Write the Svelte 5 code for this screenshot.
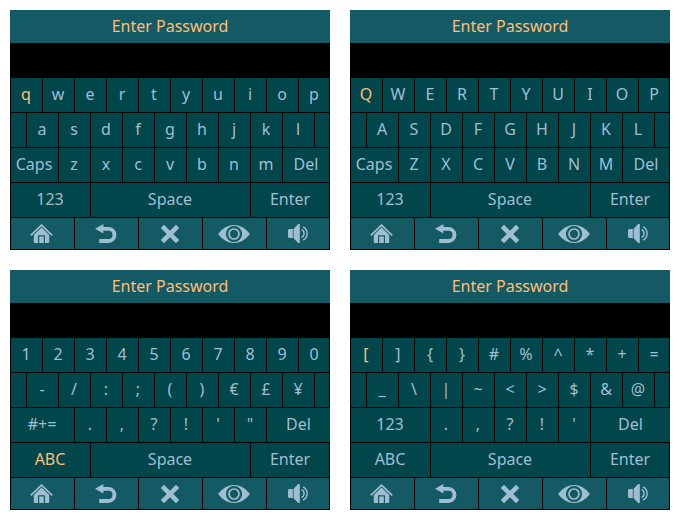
<script>
  const lower = [
    [...'qwertyuiop'],
    ['', ...'asdfghjkl', ''],
    ['Caps', ...'zxcvbnm', 'Del'],
    ['123', 'Space', 'Enter'],
  ];
  const upper = [
    [...'QWERTYUIOP'],
    ['', ...'ASDFGHJKL', ''],
    ['Caps', ...'ZXCVBNM', 'Del'],
    ['123', 'Space', 'Enter'],
  ];
  const numbers = [
    [...'1234567890'],
    ['', ...'-/:;()€£¥', ''],
    ['#+=', ...'.,?!\'"', 'Del'],
    ['ABC', 'Space', 'Enter'],
  ];
  const symbols = [
    [...'[]{}#%^*+='],
    ['', ...'_\\|~<>$&@', ''],
    ['123', ...".,?!'", 'Del'],
    ['ABC', 'Space', 'Enter'],
  ];

  const keyboards = [
    { id: 'lower', rows: lower, active: 'q', edge: 3, open: false },
    { id: 'upper', rows: upper, active: 'Q', edge: 3, open: false },
    { id: 'numbers', rows: numbers, active: 'ABC', edge: 4, open: true },
    { id: 'symbols', rows: symbols, active: '[', edge: 5, open: true },
  ];

  // Key widths are counted in half-key columns, twenty to a row.
  function span(board, row, index, length) {
    const outer = index === 0 || index === length - 1;
    if (row === 2) return outer ? board.edge : 2;
    if (row === 3) return [5, 10, 5][index];
    return 2;
  }
</script>

<main>
  {#each keyboards as board (board.id)}
    <section class="panel">
      <label class="title" for={'password-' + board.id}>Enter Password</label>
      <input id={'password-' + board.id} class="field" type="password" autocomplete="off" />
      {#each board.rows as row, r}
        <div class="row" class:open={board.open && r === 2}>
          {#each row as key, i}
            {#if key === ''}
              <span class="key s1"></span>
            {:else}
              <button type="button" class={'key s' + span(board, r, i, row.length)} class:active={key === board.active}>{key}</button>
            {/if}
          {/each}
        </div>
      {/each}
      <nav class="tools" aria-label="Player">
        <button type="button" aria-label="Home">
          <svg width="23" height="19" viewBox="0 0 23 19">
            <path d="M0.8 11.4 11.5 1.1l10.7 10.3" fill="none" stroke="currentColor" stroke-width="1.7" />
            <path fill-rule="evenodd" d="M11.5 3.6 19.2 11V18Q19.2 19 18.2 19H4.8Q3.8 19 3.8 18V11ZM8 11.2V19H9.2V12.4H13.8V19H15V11.2Z" fill="currentColor" />
          </svg>
        </button>
        <button type="button" aria-label="Back">
          <svg width="22" height="19" viewBox="0 0 22 19">
            <path d="M0 4.8 8.4 0V2.9H13.4A8 8 0 0 1 13.4 18.9H4.2V15H13.4A4.1 4.1 0 0 0 13.4 6.8H8.4V9.6Z" fill="currentColor" />
          </svg>
        </button>
        <button type="button" aria-label="Cancel">
          <svg width="20" height="20" viewBox="0 0 20 20">
            <path d="M2.4 2.4 17.6 17.6M17.6 2.4 2.4 17.6" fill="none" stroke="currentColor" stroke-width="4.6" />
          </svg>
        </button>
        <button type="button" aria-label="Show password">
          <svg width="32" height="18" viewBox="0 0 32 18">
            <path fill-rule="evenodd" d="M0 9Q7 0 16 0T32 9Q25 18 16 18T0 9ZM16 .9a8.1 8.1 0 1 0 0 16.2a8.1 8.1 0 1 0 0-16.2Z" fill="currentColor" />
            <circle cx="16" cy="9" r="5" fill="none" stroke="currentColor" stroke-width="1.7" />
          </svg>
        </button>
        <button type="button" aria-label="Volume">
          <svg width="20" height="19" viewBox="0 0 20 19">
            <path d="M0 6 1 5H4.8V14H1L0 13ZM5.6 4.8 10.2 0H11.8V19H10.2L5.6 14.2Z" fill="currentColor" />
            <path d="M13.6 5.6A4.3 4.3 0 0 1 13.6 13.4M15 2.8A7.5 7.5 0 0 1 15 16.2" fill="none" stroke="currentColor" stroke-width="1.4" />
          </svg>
        </button>
      </nav>
    </section>
  {/each}
</main>

<style>
  :global(body) {
    margin: 0;
    background: #fff;
  }
  main {
    display: grid;
    grid-template-columns: repeat(2, minmax(0, 1fr));
    gap: 20px;
    padding: 10px;
    font: 16px/24px 'Noto Sans', 'Open Sans', sans-serif;
  }
  .panel {
    display: flex;
    flex-direction: column;
    background: #000;
    color: #a0bed2;
  }
  .title {
    padding: 4px 0 5px;
    background: #145a64;
    color: #ffbe78;
    text-align: center;
  }
  .field {
    box-sizing: border-box;
    width: 100%;
    height: 34px;
    margin: 0;
    padding: 0 8px;
    border: 0;
    background: #000;
    color: #a0bed2;
    font: inherit;
    outline: 0;
  }
  .row {
    display: grid;
    grid-template-columns: repeat(20, minmax(0, 1fr));
  }
  button,
  .key {
    box-sizing: border-box;
    min-width: 0;
    margin: 0;
    padding: 0 1px 0 0;
    border: 0 solid #000;
    border-width: 1px 0 0 1px;
    border-radius: 0;
    color: inherit;
    font: inherit;
    text-align: center;
    white-space: nowrap;
    cursor: pointer;
  }
  .key {
    height: 35px;
    padding-bottom: 2px;
    background: #00464b;
  }
  .key:last-child,
  .tools button:last-child {
    padding-right: 0;
    border-right-width: 1px;
  }
  .open .key:last-child {
    border-right-width: 0;
  }
  .key.active {
    color: #ffbe78;
  }
  .s1 { grid-column: span 1; }
  .s2 { grid-column: span 2; }
  .s3 { grid-column: span 3; }
  .s4 { grid-column: span 4; }
  .s5 { grid-column: span 5; }
  .s10 { grid-column: span 10; }
  .tools {
    display: grid;
    grid-template-columns: repeat(5, minmax(0, 1fr));
  }
  .tools button {
    display: flex;
    align-items: center;
    justify-content: center;
    height: 33px;
    padding-right: 2px;
    border-bottom-width: 1px;
    background: #145a64;
  }
</style>
